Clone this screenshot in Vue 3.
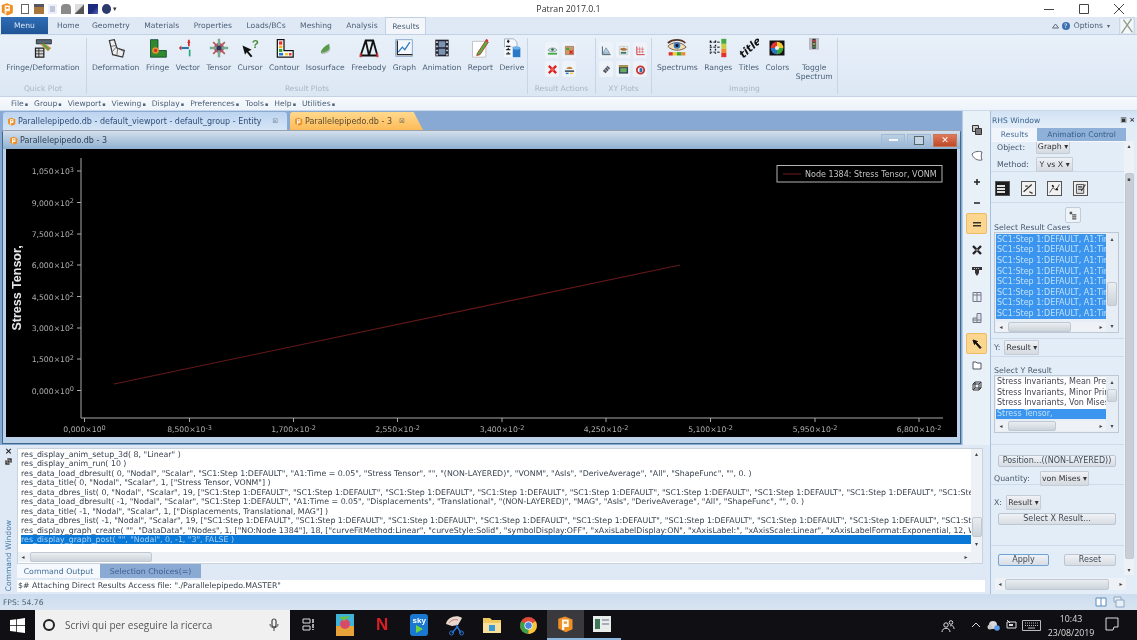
<template>
  <div class="app">
    <!-- icon sprites -->
    <svg class="sprites" width="0" height="0">
      <symbol id="i-fd" viewBox="0 0 24 24"><path d="M3 12h10v11H3z" fill="#ddd" stroke="#222" stroke-width="1.5"/><path d="M3 15.500h10M3 19h10M7 12v11" stroke="#222"/><path d="M4 2h18v5H4z" fill="#567" stroke="#222"/><path d="M8 7l10 9 4-4-8-5z" fill="#c84"/><path d="M12 7l7 7" stroke="#4a4" stroke-width="2"/></symbol>
      <symbol id="i-deform" viewBox="0 0 24 24"><path d="M4 3l6-1 3 10 9 3-2 8-12-3z" fill="#eee" stroke="#333" stroke-width="1.400"/><path d="M6 10l6-1M8 16l4-5 9 5M14 13l-1 8" stroke="#555" fill="none"/></symbol>
      <symbol id="i-fringe" viewBox="0 0 24 24"><path d="M3 2h9v13h10v8H3z" fill="#2f8a2f" stroke="#143" /><circle cx="9" cy="15" r="4" fill="#e9932c"/><circle cx="9" cy="15" r="2" fill="#c33"/></symbol>
      <symbol id="i-vector" viewBox="0 0 24 24"><path d="M13 2v8" stroke="#d22" stroke-width="2"/><path d="M13 12H4" stroke="#27a" stroke-width="2.500"/><path d="M14 14v8" stroke="#2a7" stroke-width="2"/><path d="M11 6l2-4 2 4zM4 9v6l-3-3z" fill="#c33"/></symbol>
      <symbol id="i-tensor" viewBox="0 0 24 24"><circle cx="12" cy="12" r="6" fill="#a04a90"/><path d="M12 1v22M1 12h22" stroke="#7a8" stroke-width="3"/><path d="M5 5l14 14M19 5L5 19" stroke="#b55" stroke-width="2"/><circle cx="12" cy="12" r="3" fill="#335"/></symbol>
      <symbol id="i-cursor" viewBox="0 0 24 24"><path d="M3 9l11 5-4 2 5 6-2 1-5-6-2 3z" fill="#111"/><text x="14" y="12" font-size="14" font-weight="bold" fill="#4a8a3a" font-family="Liberation Sans">?</text></symbol>
      <symbol id="i-contour" viewBox="0 0 24 24"><path d="M4 2h8v13h11v8H4z" fill="#fff" stroke="#111" stroke-width="1.500"/><path d="M6 4h4v4H6z" fill="#e33"/><path d="M6 9h4v3H6z" fill="#fa2"/><path d="M6 13h4v4H6z" fill="#3a3"/><path d="M6 18h5v3H6z" fill="#27c"/><path d="M13 18h4v3h-4z" fill="#ec3"/><path d="M18 18h3v3h-3z" fill="#e33"/></symbol>
      <symbol id="i-iso" viewBox="0 0 24 24"><path d="M7 18c0-5 6-9 10-11l1 7c-2 3-7 6-11 4z" fill="#5a9a4a"/><path d="M8 18c4 0 8-2 10-5" stroke="#bbb" stroke-width="1.500" fill="none"/></symbol>
      <symbol id="i-free" viewBox="0 0 24 24"><path d="M8 3h9l5 18H2zM8 3l4 18 5-18" fill="none" stroke="#111" stroke-width="2.200"/><path d="M2 18v5M22 18v5" stroke="#d33" stroke-width="2"/></symbol>
      <symbol id="i-graph" viewBox="0 0 24 24"><path d="M2 2h20v20H2z" fill="#f4f8fc" stroke="#7a9ac0"/><path d="M4 3v17h18" fill="none" stroke="#222" stroke-width="1.500"/><path d="M5 17l5-6 3 3 6-9" fill="none" stroke="#2a7ac8" stroke-width="1.500"/></symbol>
      <symbol id="i-anim" viewBox="0 0 24 24"><path d="M4 2h16v20H4z" fill="#223"/><path d="M8 4h8v7H8zM8 13h8v7H8z" fill="#7a93b0"/><path d="M5 4h2v2H5zM5 9h2v2H5zM5 14h2v2H5zM5 19h2v2H5zM17 4h2v2h-2zM17 9h2v2h-2zM17 14h2v2h-2zM17 19h2v2h-2z" fill="#ddd"/></symbol>
      <symbol id="i-report" viewBox="0 0 24 24"><path d="M3 4h16v19H3z" fill="#fff" stroke="#bbb"/><path d="M9 18l10-15 3 2-10 15-4 1z" fill="#5ab03a" stroke="#a33"/><path d="M18 3l3 2 1-2-2-2z" fill="#d33"/></symbol>
      <symbol id="i-derive" viewBox="0 0 24 24"><path d="M3 1h11l4 4v6H3z" fill="#f4f8fc" stroke="#9ab"/><path d="M6 4h3M7.500 2v4M5 10h5" stroke="#222" stroke-width="1.500"/><path d="M3 11v12h9V11z" fill="#f4f8fc"/><path d="M5 14h5M5 19h5M7 12l1 1M7 17l1 1" stroke="#222" stroke-width="1.500"/><path d="M13 12h9v11h-9z" fill="#2a78c8"/><ellipse cx="17.500" cy="12" rx="4.500" ry="2" fill="#6ab0ea"/></symbol>
      <symbol id="i-eye" viewBox="0 0 24 24"><path d="M1 10c5-6 17-6 22 1-6 5-17 5-22-1z" fill="#f0e0b0" stroke="#643"/><circle cx="12" cy="9" r="4" fill="#3a7ac0"/><circle cx="12" cy="9" r="1.800" fill="#112"/><path d="M1 6c6-5 16-5 21 0" stroke="#532" stroke-width="2" fill="none"/><path d="M2 17h5v4H2z" fill="#d33"/><path d="M7 17h5v4H7z" fill="#ec3"/><path d="M12 17h5v4h-5z" fill="#3a3"/><path d="M17 17h5v4h-5z" fill="#e83"/></symbol>
      <symbol id="i-ranges" viewBox="0 0 24 24"><path d="M16 1h6v6h-6z" fill="#4a4"/><path d="M16 7h6v6h-6z" fill="#cc4"/><path d="M16 13h6v5h-6z" fill="#e83"/><path d="M16 18h6v5h-6z" fill="#d33"/><path d="M2 5h12M2 11h12M2 17h12" stroke="#111" stroke-width="1.200" stroke-dasharray="3 1.500"/><path d="M3 3v16M9 3v16" stroke="#111" stroke-width="1.600" stroke-dasharray="2 3"/></symbol>
      <symbol id="i-titles" viewBox="0 0 24 24"><text x="2" y="23" font-size="13" font-weight="bold" font-style="italic" fill="#111" transform="rotate(-42 6 20)" font-family="DejaVu Sans">title</text></symbol>
      <symbol id="i-colors" viewBox="0 0 24 24"><path d="M3 3h18v18H3z" fill="#111"/><circle cx="12" cy="12" r="7.500" fill="#d33"/><path d="M12 12V4.500A7.500 7.500 0 0 1 19.500 12z" fill="#ec3"/><path d="M12 12h7.500A7.500 7.500 0 0 1 12 19.500z" fill="#3a3"/><path d="M12 12v7.500A7.500 7.500 0 0 1 4.500 12z" fill="#27c"/><circle cx="12" cy="12" r="2.500" fill="#eee"/></symbol>
      <symbol id="i-toggle" viewBox="0 0 24 24"><path d="M6 0h12v14H6z" fill="#b8b8c0"/><path d="M10 1h4v12h-4z" fill="#333"/><circle cx="12" cy="3.500" r="1.400" fill="#d33"/><circle cx="12" cy="7" r="1.400" fill="#aa4"/><circle cx="12" cy="10.500" r="1.400" fill="#484"/></symbol>
      <symbol id="i-a1" viewBox="0 0 24 24"><path d="M2 11c5-6 15-6 20 0-5 5-15 5-20 0z" fill="#cde" stroke="#555"/><circle cx="12" cy="10" r="3" fill="#374"/><path d="M2 19h20" stroke="#4a4" stroke-width="4"/></symbol>
      <symbol id="i-a2" viewBox="0 0 24 24"><path d="M3 3h18v18H3z" fill="#c96" stroke="#743"/><path d="M5 6h6v5H5z" fill="#3a3"/><path d="M12 12l7 7M19 12l-7 7" stroke="#d22" stroke-width="3"/></symbol>
      <symbol id="i-a3" viewBox="0 0 24 24"><path d="M4 4l16 16M20 4L4 20" stroke="#d22" stroke-width="5"/><circle cx="12" cy="12" r="4" fill="#e55"/></symbol>
      <symbol id="i-a4" viewBox="0 0 24 24"><path d="M5 11c3-7 11-7 14 0z" fill="#b84"/><path d="M2 14h20v3H2z" fill="#234"/><path d="M4 19h6v3H4z" fill="#27c"/><path d="M13 19h7v3h-7z" fill="#ec3"/></symbol>
      <symbol id="i-x1" viewBox="0 0 24 24"><path d="M3 3v18h18" fill="none" stroke="#356" stroke-width="2"/><path d="M4 18l7-12 8 12z" fill="#bcd" stroke="#357"/></symbol>
      <symbol id="i-x2" viewBox="0 0 24 24"><path d="M3 3h18v18H3z" fill="#eee" stroke="#aaa"/><path d="M4 9c5-4 11-4 17 1-6 4-12 3-17-1z" fill="#a74"/><path d="M6 15h12v4H6z" fill="#376"/></symbol>
      <symbol id="i-x3" viewBox="0 0 24 24"><path d="M4 3v18h17" fill="none" stroke="#c33" stroke-width="2"/><path d="M4 9h16M4 15h16M10 4v14M16 4v14" stroke="#c33"/></symbol>
      <symbol id="i-x4" viewBox="0 0 24 24"><path d="M4 15L14 4l6 5-10 11z" fill="#556"/><path d="M8 11l6 6M12 7l6 6" stroke="#ccc" stroke-width="2"/></symbol>
      <symbol id="i-x5" viewBox="0 0 24 24"><path d="M2 3h20v18H2z" fill="#345"/><path d="M2 3h20v4H2z" fill="#b94"/><path d="M5 9h14v9H5z" fill="#6a6"/></symbol>
      <symbol id="i-x6" viewBox="0 0 24 24"><circle cx="12" cy="13" r="8" fill="none" stroke="#c33" stroke-width="4"/><path d="M10 9h6v9h-6z" fill="#27a"/></symbol>
      <symbol id="i-logo" viewBox="0 0 24 24"><path d="M3 5l9-3 10 4v13l-9 4-10-5z" fill="#ef8f24"/><path d="M8 6h9v10H8zM10.500 8.500v3h4v-3z" fill="#fdf6ea" fill-rule="evenodd"/><path d="M8 16h3v4H8z" fill="#fdf6ea"/></symbol>

      <!-- vertical toolstrip -->
      <symbol id="t-copy" viewBox="0 0 12 12"><path d="M1.500 1.500h6v6h-6z" fill="#ccc" stroke="#333"/><path d="M4.500 4.500h6v6h-6z" fill="#777" stroke="#333"/></symbol>
      <symbol id="t-lasso" viewBox="0 0 12 12"><path d="M1 4c3-3 7-3 10-2-1 3-1 5 0 8-5 1-9-2-10-6z" fill="#fff" stroke="#667"/></symbol>
      <symbol id="t-plus" viewBox="0 0 12 12"><path d="M6 3v6M3 6h6" stroke="#222" stroke-width="1.500"/></symbol>
      <symbol id="t-minus" viewBox="0 0 12 12"><path d="M3 6h6" stroke="#222" stroke-width="1.500"/></symbol>
      <symbol id="t-eq" viewBox="0 0 12 12"><path d="M2 4h8v1.500H2zM2 7h8v1.500H2z" fill="#333"/></symbol>
      <symbol id="t-cross" viewBox="0 0 12 12"><path d="M2 2l8 8M10 2l-8 8" stroke="#222" stroke-width="2.400"/><circle cx="6" cy="6" r="1.500" fill="#777"/></symbol>
      <symbol id="t-tee" viewBox="0 0 12 12"><path d="M1 2h10v3H8v3L6 11 4 8V5H1z" fill="#333"/><path d="M3 3.500h6" stroke="#bbb" stroke-dasharray="1 1"/></symbol>
      <symbol id="t-pan1" viewBox="0 0 12 12"><path d="M2 1.500h8v9H2z" fill="#e8eef5" stroke="#778"/><path d="M2 4h8M6 1.500v9" stroke="#778"/></symbol>
      <symbol id="t-pan2" viewBox="0 0 12 12"><path d="M6 1.500h4v9H2V6h4z" fill="#d8dfe7" stroke="#778"/><path d="M2 8h8M6 6v4" stroke="#778"/></symbol>
      <symbol id="t-arrow" viewBox="0 0 12 12"><path d="M2 2l4.500 1.500-1 1L10 9.500 9 10.500 4.500 5.500l-1 1z" fill="#111" stroke="#111"/></symbol>
      <symbol id="t-sq" viewBox="0 0 12 12"><path d="M2 3h3l1 1h4v6H2z" fill="#fff" stroke="#556"/></symbol>
      <symbol id="t-box" viewBox="0 0 12 12"><path d="M2 4h6v6H2zM4 2h6v6H4zM2 4l2-2M8 4l2-2M2 10l2-2M8 10l2-2" fill="none" stroke="#333"/></symbol>
    </svg>

    <!-- title bar -->
    <header class="titlebar">
      <svg class="logo-q"><use href="#i-logo" /></svg>
      <div class="quick">
        <span v-for="c in quickColors" :key="c" class="qbtn" :class="c"></span>
        <span class="qdrop">▾</span>
      </div>
      <div class="apptitle">Patran 2017.0.1</div>
      <div class="winbtns">
        <svg width="12" height="12" viewBox="0 0 12 12"><path d="M1 6.500h10" stroke="#444" /></svg>
        <svg width="12" height="12" viewBox="0 0 12 12"><path d="M1.500 1.500h9v9h-9z" fill="none" stroke="#444" /></svg>
        <svg width="12" height="12" viewBox="0 0 12 12"><path d="M1 1l10 10M11 1L1 11" stroke="#444" /></svg>
      </div>
    </header>

    <!-- ribbon tabs -->
    <nav class="ribbontabs">
      <div class="menubtn">Menu</div>
      <div v-for="t in ribbonTabs" :key="t" class="rtab" :class="{ active: t === 'Results' }">{{ t }}</div>
      <div class="options">
        <svg class="opt-caret" width="7" height="6" viewBox="0 0 7 6"><path d="M.5 5L3.500 1l3 4z" fill="none" stroke="#667" /></svg>
        <span class="helpdot">?</span>
        <span>Options</span>
        <span class="opt-arrow">▾</span>
        <svg class="opt-logo" viewBox="0 0 20 20"><path d="M2 1h16v18H2z" fill="#f4f7fa" stroke="#bcd"/><path d="M4 18L15 2M6 3l10 14" stroke="#8f9c8a" stroke-width="1.500" fill="none"/></svg>
      </div>
    </nav>

    <!-- ribbon -->
    <section class="ribbon">
      <div class="group g-quick">
        <div class="items">
          <div v-for="it in quickPlot" :key="it.label" class="item">
            <svg class="bigicon"><use :href="'#' + it.icon" /></svg>
            <span>{{ it.label }}</span>
          </div>
        </div>
        <div class="grouplabel">Quick Plot</div>
      </div>
      <div class="group g-plots">
        <div class="items">
          <div v-for="it in resultPlots" :key="it.label" class="item">
            <svg class="bigicon"><use :href="'#' + it.icon" /></svg>
            <span>{{ it.label }}</span>
          </div>
        </div>
        <div class="grouplabel">Result Plots</div>
      </div>
      <div class="group g-actions">
        <div class="smallgrid two">
          <div v-for="ic in actionIcons" :key="ic" class="smallbtn"><svg><use :href="'#' + ic" /></svg></div>
        </div>
        <div class="grouplabel">Result Actions</div>
      </div>
      <div class="group g-xy">
        <div class="smallgrid three">
          <div v-for="ic in xyIcons" :key="ic" class="smallbtn"><svg><use :href="'#' + ic" /></svg></div>
        </div>
        <div class="grouplabel">XY Plots</div>
      </div>
      <div class="group g-imaging">
        <div class="items">
          <div v-for="it in imaging" :key="it.label" class="item">
            <svg class="bigicon"><use :href="'#' + it.icon" /></svg>
            <span class="wrap">{{ it.label }}</span>
          </div>
        </div>
        <div class="grouplabel">Imaging</div>
      </div>
    </section>

    <!-- classic menu -->
    <div class="menubar">
      <span v-for="m in menus" :key="m">{{ m }}<i>▪</i></span>
    </div>

    <main class="workspace">
      <div class="leftcol">
        <div class="upper">
          <div class="mdi">
            <div class="doctabs">
              <div class="doctab">
                <svg class="tabicon"><use href="#i-logo" /></svg>
                <span>Parallelepipedo.db - default_viewport - default_group - Entity</span>
                <b class="tabx">⊠</b>
              </div>
              <div class="doctab current">
                <svg class="tabicon"><use href="#i-logo" /></svg>
                <span>Parallelepipedo.db - 3</span>
                <b class="tabx">⊠</b>
              </div>
            </div>
            <div class="docwin">
              <div class="wintitle">
                <svg class="tabicon"><use href="#i-logo" /></svg>
                <span>Parallelepipedo.db - 3</span>
                <div class="wincontrols">
                  <div class="wc"><i class="wc-min"></i></div>
                  <div class="wc"><i class="wc-max"></i></div>
                  <div class="wc close">✕</div>
                </div>
              </div>
              <svg class="plot" viewBox="6 149 951 288">
                <path d="M81 158V418H943" fill="none" stroke="#a8a8a8" />
                <g stroke="#a8a8a8">
                  <path v-for="t in yTicks" :key="t.y" :d="`M77 ${t.y}H81`" />
                  <path v-for="t in xTicks" :key="t.x" :d="`M${t.x} 418V422`" />
                </g>
                <g class="ticklabel">
                  <text v-for="t in yTicks" :key="t.y" x="74" :y="t.y + 3" text-anchor="end">{{ t.m }}×10<tspan dy="-2.500" font-size="6.500">{{ t.e }}</tspan></text>
                  <text v-for="t in xTicks" :key="t.x" :x="t.x" y="432" text-anchor="middle">{{ t.m }}×10<tspan dy="-2.500" font-size="6.500">{{ t.e }}</tspan></text>
                </g>
                <text class="ytitle" transform="translate(21 288) rotate(-90)" text-anchor="middle">Stress Tensor,</text>
                <path d="M114 384L680 265" stroke="#651818" stroke-width="1.100" />
                <rect x="777" y="165.500" width="165" height="16.500" fill="none" stroke="#b4b4b4" />
                <path d="M783 174H801" stroke="#651818" stroke-width="1.100" />
                <text class="legend" x="805" y="177">Node 1384: Stress Tensor, VONM</text>
              </svg>
            </div>
          </div>
          <aside class="toolstrip">
            <div class="grip"></div>
            <div v-for="t in toolIcons" :key="t.icon" class="tool" :class="t.cls">
              <svg width="12" height="12"><use :href="'#' + t.icon" /></svg>
            </div>
          </aside>
        </div>

        <!-- command window -->
        <div class="cmdwin">
          <div class="cmdside">
            <b>×</b>
            <svg width="7" height="7" viewBox="0 0 7 7"><path d="M2 0h5v5H2zM0 2h5v5H0z" fill="#333" stroke="#fff" stroke-width=".5"/></svg>
            <span class="cmdlabel">Command Window</span>
          </div>
          <div class="cmdmain">
            <div class="cmdlog">
              <div class="loglines">
                <div v-for="(l, i) in logLines" :key="i" class="logline" :class="{ sel: i === logLines.length - 1 }">{{ l }}</div>
                <div class="hscroll logh"><em>◂</em><div class="thumb logthumb"></div><em>▸</em></div>
              </div>
              <div class="vscroll logv"><em>▴</em><div class="thumb"></div><em>▾</em></div>
            </div>
            <div class="cmdtabs">
              <div class="ctab on">Command Output</div>
              <div class="ctab">Selection Choices(=)</div>
            </div>
            <div class="cmdinput">$# Attaching Direct Results Access file: "./Parallelepipedo.MASTER"</div>
          </div>
        </div>
      </div>

      <!-- right hand side panel -->
      <aside class="rhs">
        <div class="rhstitle"><span>RHS Window</span><span class="rhsbtns">▣ <b>×</b></span></div>
        <div class="rhstabs">
          <div class="rtb on">Results</div>
          <div class="rtb">Animation Control</div>
        </div>
        <div class="rhsbody">
          <div class="rhscontent">
            <div class="sec s-obj">
              <div class="row"><label>Object:</label><span class="dd dd-a">Graph ▾</span></div>
              <div class="row"><label>Method:</label><span class="dd dd-b">Y vs X ▾</span></div>
            </div>
            <div class="sec s-icons">
              <div class="ricon dark"><i></i><i></i><i></i></div>
              <div class="ricon"><svg viewBox="0 0 16 16"><path d="M2 12L12 3M4 5h3M9 12l4 2" stroke="#333" stroke-width="1.500" fill="none"/></svg></div>
              <div class="ricon"><svg viewBox="0 0 16 16"><path d="M2 13l4-6 4 3 4-7" stroke="#333" fill="none"/><path d="M5 4l2 2M10 8l2 2" stroke="#111" stroke-width="2"/></svg></div>
              <div class="ricon"><svg viewBox="0 0 16 16"><path d="M3 3h9v11H3z" fill="#ddd" stroke="#333"/><path d="M5 6h5M5 9h5M9 11l5-8" stroke="#333" stroke-width="1.300"/></svg></div>
            </div>
            <div class="sec s-cases">
              <div class="floatbtn"><svg viewBox="0 0 12 12"><path d="M2 2h3v3H2zM5 5h5v1.500H5zM5 7.500h5V9H5zM5 10h5v1.500H5z" fill="#555"/></svg></div>
              <div class="lbl">Select Result Cases</div>
              <div class="listbox cases">
                <div class="lb-main">
                  <div class="lb-items selall">
                    <div v-for="n in 8" :key="n">SC1:Step 1:DEFAULT, A1:Time = 0.05</div>
                  </div>
                  <div class="hscroll"><em>◂</em><div class="thumb t-cases"></div><em>▸</em></div>
                </div>
                <div class="vscroll"><em>▴</em><div class="thumb t-vcases"></div><em>▾</em></div>
              </div>
            </div>
            <div class="sec s-y">
              <label>Y:</label><span class="dd dd-c">Result ▾</span>
            </div>
            <div class="sec s-sely">
              <div class="lbl">Select Y Result</div>
              <div class="listbox yres">
                <div class="lb-main">
                  <div class="lb-items">
                    <div>Stress Invariants, Mean Pressure</div>
                    <div>Stress Invariants, Minor Principal</div>
                    <div>Stress Invariants, Von Mises</div>
                    <div class="picked">Stress Tensor,</div>
                  </div>
                  <div class="hscroll"><em>◂</em><div class="thumb t-yres"></div><em>▸</em></div>
                </div>
                <div class="vscroll"><em>▴</em><div class="thumb t-vy"></div><em>▾</em></div>
              </div>
            </div>
            <div class="sec s-pos">
              <div class="btn wide">Position...((NON-LAYERED))</div>
              <div class="row r-qty"><label>Quantity:</label><span class="dd dd-d">von Mises ▾</span></div>
            </div>
            <div class="sec s-x">
              <div class="rowx"><label>X:</label><span class="dd dd-c">Result ▾</span></div>
              <div class="btn wide">Select X Result...</div>
            </div>
            <div class="s-apply">
              <div class="btn apply">Apply</div>
              <div class="btn reset">Reset</div>
            </div>
          </div>
          <div class="vscroll rhsv"><em>▴</em><div class="thumb"><u>▪</u></div><em>▾</em></div>
        </div>
        <div class="hscroll rhsh"><em>◂</em><div class="thumb"></div><em>▸</em></div>
      </aside>
    </main>

    <footer class="status">
      <span>FPS: 54.76</span>
      <div class="statusicons">
        <svg width="12" height="10" viewBox="0 0 12 10"><path d="M1 1h10v8H1z" fill="#fff" stroke="#5b8bbd"/><path d="M6 1v8" stroke="#5b8bbd"/></svg>
        <svg width="12" height="12" viewBox="0 0 12 12"><path d="M1 1h7v5H1z" fill="#e8eff7" stroke="#8aa6c4"/><path d="M3 4h8v7H3z" fill="#e8eff7" stroke="#8aa6c4"/></svg>
      </div>
    </footer>

    <!-- windows taskbar -->
    <div class="taskbar">
      <div class="startbtn">
        <svg width="15" height="15" viewBox="0 0 16 16"><path d="M0 2.200l6.500-.9v6.300H0zM7.300 1.200L16 0v7.600H7.300zM0 8.400h6.500v6.300L0 13.800zM7.300 8.400H16V16l-8.700-1.200z" fill="#fff"/></svg>
      </div>
      <div class="searchbox">
        <span class="cortana"></span>
        <span class="searchtext">Scrivi qui per eseguire la ricerca</span>
        <svg width="10" height="14" viewBox="0 0 10 14"><rect x="3" y="1" width="4" height="8" rx="2" fill="none" stroke="#444" stroke-width="1.200"/><path d="M1 6c0 5 8 5 8 0M5 10v3" stroke="#444" fill="none"/></svg>
      </div>
      <div class="tb-item tv">
        <svg width="14" height="14" viewBox="0 0 14 14"><path d="M1 1h7v4H1zM1 8h7v4H1z" fill="none" stroke="#ddd"/><path d="M11 1v11" stroke="#ddd" stroke-width="1.500" stroke-dasharray="4 1"/></svg>
      </div>
      <div class="tb-item">
        <svg width="18" height="22" viewBox="0 0 18 22"><path d="M0 0h18v22H0z" fill="#3db4d8"/><path d="M0 12h18v10H0z" fill="#e8a23a"/><circle cx="9" cy="10" r="5" fill="#d84a6a"/><path d="M3 3l5 4 6-5z" fill="#6ac24a"/></svg>
      </div>
      <div class="tb-item netflix">N</div>
      <div class="tb-item">
        <svg width="18" height="22" viewBox="0 0 18 22"><rect width="18" height="22" rx="3" fill="#1a78d0"/><path d="M6 11l7 4-7 4z" fill="#6cd43c"/><text x="2.500" y="8.500" font-size="8" font-weight="bold" fill="#fff" font-family="Liberation Sans">sky</text></svg>
      </div>
      <div class="tb-item">
        <svg width="22" height="22" viewBox="0 0 22 22"><path d="M2 10C3 3 13 0 18 4l-4 7-6 1z" fill="#e8d8cc"/><path d="M5 9c2-3 6-4 9-3" stroke="#b77" fill="none"/><path d="M12 11l5 8M14 12l-6 7" stroke="#2a70d0" stroke-width="1.500"/><circle cx="17.500" cy="19" r="2" fill="none" stroke="#2a70d0"/><circle cx="7.500" cy="19" r="2" fill="none" stroke="#2a70d0"/></svg>
      </div>
      <div class="tb-item">
        <svg width="18" height="16" viewBox="0 0 18 16"><path d="M0 1h7l2 2h9v13H0z" fill="#f0c860"/><path d="M0 6h18v10H0z" fill="#f8e09a"/><path d="M6 8h6v6H6z" fill="#3a9ad8"/></svg>
      </div>
      <div class="tb-item">
        <svg width="17" height="17" viewBox="0 0 20 20"><circle cx="10" cy="10" r="10" fill="#e04a3a"/><path d="M10 10L1.500 5A10 10 0 0 0 10 20z" fill="#3aa04a"/><path d="M10 10l8.500-5A10 10 0 0 1 10 20z" fill="#f5c838"/><circle cx="10" cy="10" r="4.500" fill="#4a88e0" stroke="#fff"/></svg>
      </div>
      <div class="tb-item running">
        <svg width="18" height="18"><use href="#i-logo" /></svg>
      </div>
      <div class="tb-item running2">
        <svg width="18" height="16" viewBox="0 0 18 16"><path d="M0 0h18v16H0z" fill="#e8ecea"/><path d="M2 3h5v10H2z" fill="#3e7a5a"/><path d="M9 3h7v2H9zM9 7h7v2H9z" fill="#aab"/></svg>
      </div>
      <div class="tray">
        <svg class="t-people" width="14" height="14" viewBox="0 0 14 14"><circle cx="5" cy="6" r="2.200" fill="none" stroke="#ddd"/><circle cx="10" cy="3.500" r="1.800" fill="none" stroke="#ddd"/><path d="M1 13c0-5 8-5 8 0M9 7c2-1 4 0 4 3" fill="none" stroke="#ddd"/></svg>
        <svg class="t-caret" width="10" height="6" viewBox="0 0 10 6"><path d="M1 5l4-4 4 4" fill="none" stroke="#ddd"/></svg>
        <svg class="t-cloud" width="13" height="11" viewBox="0 0 13 11"><circle cx="6" cy="5" r="4" fill="#d8d8d8"/><circle cx="3" cy="7" r="2.500" fill="#c8c8c8"/><circle cx="10" cy="8" r="2.800" fill="#5a9ae8"/></svg>
        <svg class="t-bat" width="12" height="9" viewBox="0 0 12 9"><path d="M1 2h9v6H1z" fill="none" stroke="#ddd"/><path d="M1 0l3 3" stroke="#ddd"/><path d="M3 4h4v2H3z" fill="#ddd"/></svg>
        <svg class="t-kbd" width="19" height="11" viewBox="0 0 19 11"><path d="M.5.500h18v10H.5z" fill="none" stroke="#bbb"/><path d="M3 3h13M3 5.500h13" stroke="#bbb" stroke-dasharray="1 1"/><path d="M6 8h7" stroke="#bbb"/></svg>
        <div class="clock"><span>10:43</span><span>23/08/2019</span></div>
        <svg class="t-notif" width="14" height="14" viewBox="0 0 14 14"><path d="M1 1h12v9H9l-1 3H1z" fill="none" stroke="#ddd"/></svg>
      </div>
    </div>
  </div>
</template>

<script setup>
const quickColors = ['doc', 'open', 'undo', 'bag', 'pen', 'blue', 'grid']

const ribbonTabs = ['Home', 'Geometry', 'Materials', 'Properties', 'Loads/BCs', 'Meshing', 'Analysis', 'Results']

const quickPlot = [{ label: 'Fringe/Deformation', icon: 'i-fd' }]

const resultPlots = [
  { label: 'Deformation', icon: 'i-deform' },
  { label: 'Fringe', icon: 'i-fringe' },
  { label: 'Vector', icon: 'i-vector' },
  { label: 'Tensor', icon: 'i-tensor' },
  { label: 'Cursor', icon: 'i-cursor' },
  { label: 'Contour', icon: 'i-contour' },
  { label: 'Isosurface', icon: 'i-iso' },
  { label: 'Freebody', icon: 'i-free' },
  { label: 'Graph', icon: 'i-graph' },
  { label: 'Animation', icon: 'i-anim' },
  { label: 'Report', icon: 'i-report' },
  { label: 'Derive', icon: 'i-derive' }
]

const actionIcons = ['i-a1', 'i-a2', 'i-a3', 'i-a4']
const xyIcons = ['i-x1', 'i-x2', 'i-x3', 'i-x4', 'i-x5', 'i-x6']

const imaging = [
  { label: 'Spectrums', icon: 'i-eye' },
  { label: 'Ranges', icon: 'i-ranges' },
  { label: 'Titles', icon: 'i-titles' },
  { label: 'Colors', icon: 'i-colors' },
  { label: 'Toggle Spectrum', icon: 'i-toggle' }
]

const menus = ['File', 'Group', 'Viewport', 'Viewing', 'Display', 'Preferences', 'Tools', 'Help', 'Utilities']

const yTicks = [
  { y: 171, m: '1,050', e: '3' },
  { y: 202.5, m: '9,000', e: '2' },
  { y: 234, m: '7,500', e: '2' },
  { y: 265, m: '6,000', e: '2' },
  { y: 296.5, m: '4,500', e: '2' },
  { y: 328, m: '3,000', e: '2' },
  { y: 359, m: '1,500', e: '2' },
  { y: 390.5, m: '0,000', e: '0' }
]

const xTicks = [
  { x: 84.5, m: '0,000', e: '0' },
  { x: 189.5, m: '8,500', e: '-3' },
  { x: 293.5, m: '1,700', e: '-2' },
  { x: 397.5, m: '2,550', e: '-2' },
  { x: 502, m: '3,400', e: '-2' },
  { x: 606, m: '4,250', e: '-2' },
  { x: 710.5, m: '5,100', e: '-2' },
  { x: 815, m: '5,950', e: '-2' },
  { x: 919, m: '6,800', e: '-2' }
]

const toolIcons = [
  { icon: 't-copy', cls: 'sep' },
  { icon: 't-lasso', cls: 'sep' },
  { icon: 't-plus' },
  { icon: 't-minus' },
  { icon: 't-eq', cls: 'on sep' },
  { icon: 't-cross' },
  { icon: 't-tee', cls: 'sep' },
  { icon: 't-pan1' },
  { icon: 't-pan2', cls: 'sep' },
  { icon: 't-arrow', cls: 'on' },
  { icon: 't-sq' },
  { icon: 't-box' }
]

const scStep = '"SC1:Step 1:DEFAULT"'
const scList = Array(12).fill(scStep).join(', ')

const logLines = [
  'res_display_anim_setup_3d( 8, "Linear" )',
  'res_display_anim_run( 10 )',
  'res_data_load_dbresult( 0, "Nodal", "Scalar", "SC1:Step 1:DEFAULT", "A1:Time = 0.05", "Stress Tensor", "", "(NON-LAYERED)", "VONM", "AsIs", "DeriveAverage", "All", "ShapeFunc", "", 0. )',
  'res_data_title( 0, "Nodal", "Scalar", 1, ["Stress Tensor, VONM"] )',
  `res_data_dbres_list( 0, "Nodal", "Scalar", 19, [${scList}`,
  'res_data_load_dbresult( -1, "Nodal", "Scalar", "SC1:Step 1:DEFAULT", "A1:Time = 0.05", "Displacements", "Translational", "(NON-LAYERED)", "MAG", "AsIs", "DeriveAverage", "All", "ShapeFunc", "", 0. )',
  'res_data_title( -1, "Nodal", "Scalar", 1, ["Displacements, Translational, MAG"] )',
  `res_data_dbres_list( -1, "Nodal", "Scalar", 19, [${scList}`,
  'res_display_graph_create( "", "DataData", "Nodes", 1, ["NO:Node 1384"], 18, ["curveFitMethod:Linear", "curveStyle:Solid", "symbolDisplay:OFF", "xAxisLabelDisplay:ON", "xAxisLabel:", "xAxisScale:Linear", "xAxisLabelFormat:Exponential, 12, White", "xAxisLabelColor:White"',
  'res_display_graph_post( "", "Nodal", 0, -1, "3", FALSE )'
]
</script>

<style>
html, body { margin: 0; background: #000; }
</style>

<style scoped>
.app {
  width: 1137px;
  height: 640px;
  overflow: hidden;
  display: grid;
  grid-template-rows: 17px 18px 62px 14px 483px 16px 30px;
  font-family: "DejaVu Sans", sans-serif;
  font-size: 7.6px;
  color: #4d6178;
  background: #dbe6f3;
  filter: blur(0.45px);
}
.sprites { position: absolute; }

/* title bar */
.titlebar {
  background: #fff;
  display: flex;
  align-items: center;
  position: relative;
}
.logo-q { width: 14px; height: 14px; margin-left: 0; flex: none; }
.quick { display: flex; align-items: center; gap: 4px; margin-left: 6px; }
.qbtn { width: 9.500px; height: 10px; display: block; box-sizing: border-box; }
.qbtn.doc { background: #fff; border: 1px solid #666; width: 8px; margin: 0 1px; }
.qbtn.open { background: #a8763a; border-top: 3px solid #556; }
.qbtn.undo { background: #bcc8d4; border: 2px solid #eef; }
.qbtn.bag { background: #8a8a8a; border-radius: 4px 4px 0 0; }
.qbtn.pen { background: linear-gradient(135deg, #ddd 45%, #555 55%); }
.qbtn.blue { background: linear-gradient(135deg, #1b2a7a 55%, #5a6ac0); }
.qbtn.grid { background: #2b3a6a; border-radius: 50%; }
.qdrop { font-size: 7px; color: #333; margin-left: -2px; }
.apptitle {
  position: absolute;
  left: 0;
  right: 0;
  text-align: center;
  font: 8.800px "Open Sans", sans-serif;
  color: #333;
}
.winbtns {
  margin-left: auto;
  margin-right: 12px;
  display: flex;
  gap: 23px;
}

/* ribbon tabs */
.ribbontabs {
  display: flex;
  align-items: stretch;
  background: #dfe9f5;
  border-bottom: 1px solid #c2d1e3;
  box-sizing: border-box;
}
.menubtn {
  width: 47px;
  margin-left: 1px;
  background: linear-gradient(#2f6db5, #1f5596);
  color: #d6e6f8;
  display: flex;
  align-items: center;
  justify-content: center;
}
.rtab {
  padding: 0 5.5px 0 6px;
  margin-left: 3px;
  display: flex;
  align-items: center;
}
.menubtn + .rtab { margin-right: -2px; }
.rtab.active {
  background: #f2f6fb;
  border: 1px solid #c2d1e3;
  border-bottom: none;
  margin-left: 2px;
}
.options {
  margin-left: auto;
  display: flex;
  align-items: center;
  gap: 3px;
  position: relative;
  padding-right: 1px;
}
.helpdot {
  width: 8px;
  height: 8px;
  border-radius: 50%;
  background: #3d70b0;
  color: #fff;
  font-size: 6px;
  text-align: center;
  line-height: 8px;
  margin-right: 1px;
}
.opt-arrow { font-size: 6px; margin-left: 1px; margin-right: 5px; }
.opt-logo { width: 18px; height: 18px; }

/* ribbon */
.ribbon {
  display: flex;
  background: linear-gradient(#e8f0f9, #dce7f4);
  border-bottom: 1px solid #c5d3e4;
  box-sizing: border-box;
  padding-top: 3px;
}
.group {
  border-right: 1px solid #c8d5e5;
  box-sizing: border-box;
  display: flex;
  flex-direction: column;
  height: 56px;
}
.g-quick { width: 87px; }
.g-plots { width: 441px; }
.g-actions { width: 68px; }
.g-xy { width: 56px; }
.g-imaging { width: 186px; }
.items { display: flex; gap: 6.500px; padding: 0 5px; height: 45px; }
.g-quick .items { justify-content: center; padding: 0; }
.item { display: flex; flex-direction: column; align-items: center; }
.item span { line-height: 9px; text-align: center; white-space: nowrap; margin-top: 5px; }
.item span.wrap { white-space: normal; max-width: 42px; }
.bigicon { width: 20px; height: 20px; display: block; }
.smallgrid { display: grid; gap: 3px 3px; height: 45px; align-content: start; padding-top: 4px; box-sizing: border-box; }
.smallgrid.two { grid-template-columns: 14px 14px; margin-left: 17px; }
.smallgrid.three { grid-template-columns: 14px 14px 14px; margin-left: 3px; }
.smallbtn {
  width: 14px;
  height: 16px;
  background: #eef3f9;
  border-radius: 2px;
  display: flex;
  align-items: center;
  justify-content: center;
}
.smallbtn svg { width: 11px; height: 11px; }
.grouplabel { text-align: center; color: #a9b7c6; line-height: 11px; }

/* classic menu */
.menubar {
  display: flex;
  align-items: center;
  gap: 6px;
  padding-left: 11px;
  background: linear-gradient(#f7fafd, #edf3fa);
  border-bottom: 1px solid #cbd8e8;
  box-sizing: border-box;
}
.menubar i { font-size: 5px; font-style: normal; margin-left: 1px; }

/* workspace */
.workspace {
  display: grid;
  grid-template-columns: 990px 147px;
  background: #dfe9f5;
  min-height: 0;
}
.leftcol { display: flex; flex-direction: column; min-width: 0; }
.upper { display: flex; height: 334px; }
.mdi {
  width: 962px;
  background: #88a9d3;
  display: flex;
  flex-direction: column;
}
.doctabs { display: flex; height: 19px; padding: 1px 0 0 3px; box-sizing: border-box; gap: 3px; font-size: 8px; }
.doctab {
  width: 284px;
  background: linear-gradient(#bcd4f0, #d6e5f6);
  border-radius: 3px 3px 0 0;
  display: flex;
  align-items: center;
  padding-left: 4px;
  box-sizing: border-box;
  color: #2f4f78;
  white-space: nowrap;
}
.doctab.current {
  width: 133px;
  background: linear-gradient(#ffd98e, #fdbb58);
  clip-path: polygon(0 0, 93% 0, 100% 100%, 0 100%);
  color: #5c4a2c;
}
.tabicon { width: 9px; height: 9px; margin-right: 2px; flex: none; }
.tabx { font-weight: normal; font-size: 7px; margin-left: auto; margin-right: 9px; color: #8a96a4; }
.doctab.current .tabx { margin-left: 7px; color: #8a7a60; }
.docwin {
  margin-left: 2px;
  width: 959px;
  height: 314px;
  box-sizing: border-box;
  background: #bcd2ea;
  border: 1px solid #3c6a88;
  border-top-color: #9aa4b0;
  padding: 0 3px 3px;
  display: flex;
  flex-direction: column;
  border-radius: 3px 3px 0 0;
}
.wintitle {
  height: 18px;
  flex: none;
  display: flex;
  align-items: center;
  padding-left: 6px;
  margin: 0 -3px;
  padding-right: 3px;
  background: linear-gradient(#d3dfec, #8fb1d2);
  color: #2f3f55;
  font-size: 8px;
}
.wincontrols { margin-left: auto; display: flex; gap: 2px; }
.wc {
  width: 24px;
  height: 13px;
  border: 1px solid #a3bad2;
  box-sizing: border-box;
  background: linear-gradient(#b9cee4, #9ab8d6);
  display: flex;
  align-items: center;
  justify-content: center;
}
.wc-min { width: 9px; height: 2px; background: #f4f7fb; }
.wc-max { width: 8px; height: 7px; border: 1px solid #566; background: #c4d4e4; }
.wc.close { background: linear-gradient(#e07858, #bd4a28); color: #fff; font-size: 9px; font-weight: bold; border-color: #c8765a; }
.plot { width: 951px; height: 288px; background: #000; display: block; flex: none; }
.ticklabel { font: 7.700px "DejaVu Sans", sans-serif; fill: #aeaeae; }
.ytitle { font: bold 12.500px "Liberation Sans", sans-serif; fill: #e8e8e8; }
.legend { font: 8px "DejaVu Sans", sans-serif; fill: #c4c4c4; }

/* vertical toolstrip */
.toolstrip {
  width: 28px;
  background: #e8f0f8;
  border-left: 1px solid #b8cbe0;
  box-sizing: border-box;
  display: flex;
  flex-direction: column;
  align-items: center;
}
.grip { height: 8px; flex: none; }
.tool {
  width: 21px;
  height: 21px;
  display: flex;
  align-items: center;
  justify-content: center;
  flex: none;
}
.tool.sep { margin-bottom: 5px; }
.tool.on { background: #fcd58e; border: 1px solid #eebb66; box-sizing: border-box; border-radius: 2px; }

/* command window */
.cmdwin { display: flex; height: 149px; margin-top: 1px; border-bottom: 1px solid #b8cbe0; box-sizing: border-box; }
.cmdside {
  width: 17px;
  flex: none;
  display: flex;
  flex-direction: column;
  align-items: center;
  padding-top: 1px;
  box-sizing: border-box;
  position: relative;
}
.cmdside b { font-size: 9px; color: #222; line-height: 9px; margin-bottom: 2px; }
.cmdlabel {
  position: absolute;
  bottom: 3px;
  writing-mode: vertical-rl;
  transform: rotate(180deg);
  color: #3f7aa8;
  white-space: nowrap;
}
.cmdmain { width: 966px; display: flex; flex-direction: column; }
.cmdlog {
  height: 116px;
  margin-top: 2px;
  background: #fff;
  border: 1px solid #c9d3de;
  box-sizing: border-box;
  display: flex;
  flex: none;
}
.loglines { flex: 1; min-width: 0; overflow: hidden; padding: 1px 0 0 3px; position: relative; }
.logline {
  white-space: nowrap;
  line-height: 9.450px;
  height: 9.450px;
  overflow: hidden;
  color: #38424e;
  font-size: 7.850px;
}
.logline.sel { background: #0a78d7; color: #a9d2f4; }
.logv { padding-bottom: 14px; box-sizing: border-box; }
.logv .thumb { height: 12px; margin-bottom: 2px; }
.logh { position: absolute; left: 0; right: 0; bottom: 1px; }
.logthumb { width: 122px; margin-left: 2px; }
.cmdtabs { display: flex; height: 14px; flex: none; font-size: 7.800px; white-space: nowrap; }
.ctab { display: flex; align-items: center; background: #8aaad4; color: #3d5f8f; width: 101px; justify-content: center; box-sizing: border-box; }
.ctab.on { background: #f5f9fd; color: #3f6c96; width: 83px; }
.cmdinput {
  height: 12px;
  margin-top: 2px;
  background: #fff;
  line-height: 12px;
  padding-left: 1px;
  color: #38424e;
  margin-right: -2px;
  font-size: 7.800px;
}

/* scrollbars */
.hscroll, .vscroll { display: flex; align-items: center; background: #eef2f7; color: #444; }
.hscroll em, .vscroll em { font-style: normal; font-size: 6px; line-height: 10px; width: 10px; text-align: center; flex: none; }
.hscroll { height: 10px; justify-content: space-between; }
.vscroll { width: 11px; flex-direction: column; justify-content: space-between; flex: none; }
.thumb { background: linear-gradient(#eaeef2, #ccd3da); border: 1px solid #c0c8d2; box-sizing: border-box; border-radius: 2px; }
.hscroll .thumb { height: 10px; margin-right: auto; }
.vscroll .thumb { width: 10px; height: 20px; margin-top: auto; }

/* RHS panel */
.rhs {
  background: #e3edf8;
  border-left: 1px solid #a8c0dc;
  box-sizing: border-box;
  display: flex;
  flex-direction: column;
  width: 147px;
  min-height: 0;
}
.rhstitle {
  height: 17px;
  flex: none;
  display: flex;
  justify-content: space-between;
  align-items: center;
  padding: 1px 2px 0 1px;
  box-sizing: border-box;
  color: #3a6590;
  background: linear-gradient(#d2e2f4, #e4eef9);
}
.rhsbtns { color: #333; font-size: 7px; }
.rhstabs { display: flex; height: 13px; flex: none; margin-left: 1px; }
.rtb { background: #8fb0d8; color: #34608c; width: 89px; display: flex; align-items: center; justify-content: center; }
.rtb.on { background: #f0f5fb; color: #4a6f96; width: 45px; }
.rhsbody { display: flex; height: 436px; flex: none; }
.rhscontent { width: 133px; flex: none; overflow: hidden; border-top: 1px solid #f5f8fc; position: relative; font-size: 7.800px; }
.rhsv { width: 10px; height: 434px; background: #eef2f7; }
.rhsv .thumb { height: 392px; width: 9px; margin-top: 22px; margin-bottom: 6px; background: #c9ced6; text-align: center; }
.rhsv u { text-decoration: none; font-size: 5px; }
.rhsh { margin: 1px 11px 0 4px; height: 12px; }
.rhsh .thumb { width: 104px; height: 11px; }
.sec { border-bottom: 1px solid #cddaea; box-sizing: border-box; padding-left: 3px; }
.row { display: flex; align-items: center; }
label { color: #47566a; }
.dd {
  display: inline-block;
  background: linear-gradient(#eef1f5, #d5dae1);
  border: 1px solid #c5ccd6;
  border-radius: 1px;
  box-sizing: border-box;
  text-align: center;
  color: #333;
  white-space: nowrap;
}
.s-obj { height: 31px; padding-left: 6px; }
.s-obj .row label { width: 39px; }
.s-obj .row:first-child { height: 13px; margin-top: -1px; }
.s-obj .row:last-child { margin-top: 3px; }
.dd-a { width: 34px; height: 13px; line-height: 10px; }
.dd-b { width: 37px; height: 15px; line-height: 14px; }
.s-icons { height: 31px; display: flex; gap: 11px; padding: 3px 0 0 4px; align-items: center; }
.ricon {
  width: 15px;
  height: 15px;
  border: 1px solid #555;
  background: #f1f1f1;
  box-sizing: border-box;
  display: flex;
  flex-direction: column;
  justify-content: center;
  gap: 1px;
}
.ricon svg { width: 100%; height: 100%; }
.ricon.dark { background: #1c1c1c; padding: 1px; }
.ricon.dark i { height: 2px; background: #ddd; width: 8px; }
.s-cases { height: 136px; padding-top: 19px; position: relative; }
.floatbtn {
  position: absolute;
  left: 74px;
  top: 4px;
  width: 16px;
  height: 16px;
  background: #eef3f8;
  border: 1px solid #c0ccd9;
  border-radius: 2px;
  box-sizing: border-box;
  display: flex;
  align-items: center;
  justify-content: center;
}
.floatbtn svg { width: 10px; height: 10px; }
.lbl { color: #47566a; line-height: 11px; white-space: nowrap; margin-bottom: -1px; }
.listbox {
  width: 125px;
  border: 1px solid #bcc8d6;
  box-sizing: border-box;
  display: flex;
  background: #e6edf5;
  padding: 1px 0 1px 1px;
}
.lb-main { width: 110px; flex: none; }
.lb-items { background: #fff; overflow: hidden; white-space: nowrap; color: #445; font-size: 8px; }
.lb-items div { line-height: 10.600px; height: 10.600px; padding-left: 1px; }
.selall { background: #3b95ee; color: #bfe0fb; height: 85px; padding-top: 0.800px; box-sizing: border-box; }
.picked { background: #3b95ee; color: #bfe0fb; }
.cases { height: 101px; }
.cases .hscroll { margin-top: 3px; }
.t-cases { width: 63px; margin-left: 2px; }
.t-yres { width: 48px; margin-left: 2px; }
.listbox .vscroll { height: 100%; background: #e6edf5; width: 12px; }
.t-vcases { height: 24px !important; margin-top: 38px !important; margin-bottom: auto; }
.t-vy { height: 13px !important; margin-top: 2px !important; margin-bottom: auto; }
.s-y { height: 18px; display: flex; align-items: center; gap: 4px; }
.dd-c { width: 35px; height: 15px; line-height: 14px; }
.s-sely { height: 88px; padding-top: 8px; }
.yres { height: 58px; }
.yres .hscroll { margin-top: 2px; }
.s-pos { height: 40px; padding-top: 10px; }
.btn {
  background: linear-gradient(#eff2f6, #d8dde3);
  border: 1px solid #bcc5d0;
  border-radius: 2px;
  box-sizing: border-box;
  height: 12px;
  line-height: 10px;
  text-align: center;
  color: #3e4a56;
  white-space: nowrap;
  font-size: 8px;
}
.btn.wide { width: 118px; margin-left: 4px; }
.r-qty { margin-top: 4px; }
.r-qty label { width: 46px; }
.dd-d { width: 49px; height: 15px; line-height: 14px; }
.s-x { height: 61px; padding-top: 10px; }
.rowx { display: flex; align-items: center; gap: 4px; margin-bottom: 3px; }
.s-apply { display: flex; gap: 15px; padding: 8px 0 0 7px; }
.btn.apply { width: 51px; border-color: #6fa3d8; }
.btn.reset { width: 52px; }

/* status bar */
.status {
  background: linear-gradient(#cdddee, #d8e4f1);
  display: flex;
  align-items: center;
  padding-left: 3px;
  color: #4a6178;
}
.statusicons { margin-left: auto; margin-right: 12px; display: flex; gap: 6px; align-items: center; }

/* taskbar */
.taskbar {
  background: #101014;
  display: flex;
  align-items: stretch;
  position: relative;
  color: #ddd;
}
.startbtn { width: 35px; display: flex; align-items: center; justify-content: center; }
.searchbox {
  width: 255px;
  background: #f0f0f0;
  display: flex;
  align-items: center;
  box-sizing: border-box;
  padding: 0 11px 0 8px;
}
.cortana { width: 12px; height: 12px; border: 2px solid #222; border-radius: 50%; box-sizing: border-box; flex: none; }
.searchtext { font: 10px "Open Sans", sans-serif; color: #555; margin-left: 10px; flex: 1; white-space: nowrap; }
.tb-item { width: 36.700px; display: flex; align-items: center; justify-content: center; flex: none; }
.tb-item.tv { width: 37px; }
.tb-item.running { background: #3a3a3e; border-bottom: 2px solid #8ab8e0; box-sizing: border-box; }
.tb-item.running2 { border-bottom: 2px solid #8ab8e0; box-sizing: border-box; }
.netflix { color: #d81f26; font: bold 17px "Liberation Sans", sans-serif; }
.tray { position: absolute; inset: 0 0 0 auto; width: 200px; }
.tray svg { position: absolute; }
.t-people { left: 4px; top: 9px; }
.t-caret { left: 34px; top: 12px; }
.t-cloud { left: 50px; top: 10px; }
.t-bat { left: 69px; top: 10px; }
.t-kbd { left: 85px; top: 10px; }
.t-notif { left: 168px; top: 7px; }
.clock {
  position: absolute;
  left: 106px;
  width: 56px;
  top: 2px;
  display: flex;
  flex-direction: column;
  align-items: center;
  font: 8.800px/14px "Open Sans", sans-serif;
  color: #ddd;
}
</style>
